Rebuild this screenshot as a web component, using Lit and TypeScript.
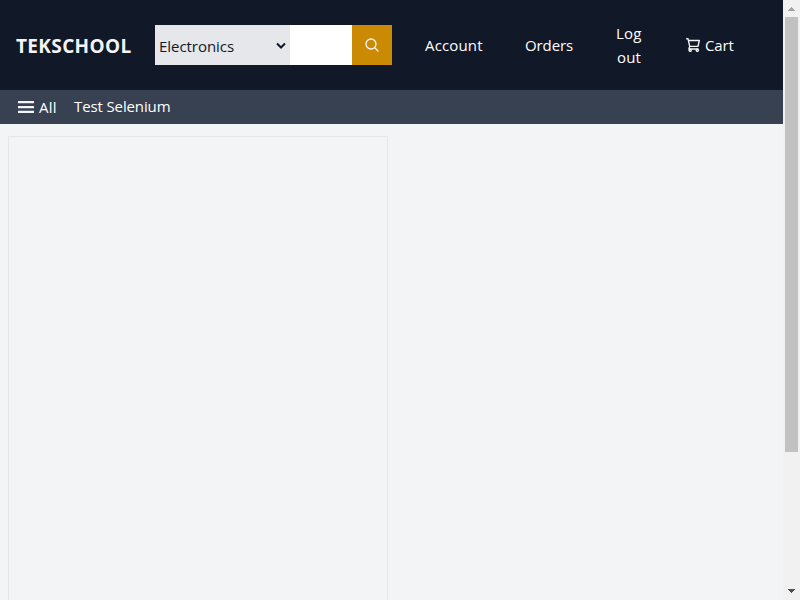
import { LitElement, html, css } from "lit";
import { customElement } from "lit/decorators.js";

@customElement("app-root")
export class AppRoot extends LitElement {
  static styles = css`
    :host {
      display: flex;
      width: 800px;
      height: 600px;
      overflow: hidden;
      background: #f3f4f6;
      font: 15px/24px "Open Sans", "Noto Sans", sans-serif;
      color: #fff;
    }
    * { box-sizing: border-box; }
    svg { display: block; flex: none; }
    .page { width: 783px; display: flex; flex-direction: column; }
    .top {
      height: 90px;
      flex: none;
      display: flex;
      align-items: center;
      background: #111827;
      padding-left: 16px;
    }
    .brand { width: 139px; font-size: 19px; font-weight: 700; line-height: 28px; padding-top: 1px; letter-spacing: 0.35px; white-space: nowrap; color: #f3f4f6; }
    .search { display: flex; width: 237px; height: 40px; }
    .category {
      width: 135px;
      display: flex;
      align-items: center;
      justify-content: space-between;
      padding: 2px 4px 0;
      background: #e5e7eb;
      color: #111827;
    }
    .category span { letter-spacing: -0.05px; }
    .query { width: 62px; background: #fff; }
    .go { width: 40px; background: #ca8a04; color: #f3f4f6; display: grid; place-items: center; }
    .links { display: flex; align-items: center; padding-left: 33px; }
    .account { width: 100px; letter-spacing: 0.15px; }
    .orders { width: 91px; letter-spacing: -0.1px; }
    .logout { width: 70px; letter-spacing: 0.15px; }
    .logout span { display: block; }
    .logout span + span { padding-left: 1px; }
    .cart { display: flex; align-items: center; gap: 5px; }
    .cart span { letter-spacing: -0.1px; }
    .sub {
      height: 34px;
      flex: none;
      display: flex;
      align-items: center;
      background: #374151;
      padding: 0 18px;
    }
    .all { display: flex; align-items: center; gap: 5px; width: 56px; letter-spacing: 0.3px; }
    .test { padding-bottom: 2px; letter-spacing: -0.12px; }
    .panel { width: 380px; margin: 12px 0 0 8px; flex: 1; border: 1px solid #e5e7eb; border-bottom: 0; }
    .scroll {
      width: 17px;
      background: #f1f1f1;
      display: flex;
      flex-direction: column;
      align-items: center;
      justify-content: space-between;
    }
    .thumb { width: 13px; height: 435px; background: #c1c1c1; margin-bottom: auto; }
  `;

  render() {
    return html`
      <div class="page">
        <header class="top">
          <div class="brand">TEKSCHOOL</div>
          <div class="search">
            <div class="category">
              <span>Electronics</span>
              <svg width="10" height="8" viewBox="0 0 10 8" fill="none" stroke="#111827" stroke-width="2"><path d="M1 1.5L5 5.5L9 1.5" /></svg>
            </div>
            <div class="query"></div>
            <div class="go">
              <svg width="16" height="16" viewBox="0 0 24 24" fill="none" stroke="currentColor" stroke-width="2" stroke-linecap="round">
                <path d="M21 21l-5.197-5.197m0 0A7.5 7.5 0 105.196 5.196a7.5 7.5 0 0010.607 10.607z" />
              </svg>
            </div>
          </div>
          <nav class="links">
            <span class="account">Account</span>
            <span class="orders">Orders</span>
            <div class="logout"><span>Log</span><span>out</span></div>
            <div class="cart">
              <svg width="14" height="14" viewBox="0 0 14 14" fill="none" stroke="#f3f4f6" stroke-width="1.4" stroke-linejoin="round" stroke-linecap="round">
                <path d="M.7.7H2L3.7 8.4H12L13.3 2.5H2.4M3.7 8.4L2.9 11H12" />
                <circle cx="4.2" cy="12.3" r="1.1" />
                <circle cx="11.3" cy="12.3" r="1.1" />
              </svg>
              <span>Cart</span>
            </div>
          </nav>
        </header>
        <div class="sub">
          <div class="all">
            <svg width="16" height="12" viewBox="0 0 16 12" fill="#f3f4f6"><path d="M0 0h16v2.3H0zM0 5h16v2.2H0zM0 9.8h16v2.2H0z" /></svg>
            <span>All</span>
          </div>
          <span class="test">Test Selenium</span>
        </div>
        <main class="panel"></main>
      </div>
      <div class="scroll">
        <svg width="17" height="17" shape-rendering="crispEdges"><path d="M5 11L8.5 7L12 11z" fill="#a3a3a3" /></svg>
        <div class="thumb"></div>
        <svg width="17" height="17" shape-rendering="crispEdges"><path d="M5 6L8.5 10L12 6z" fill="#505050" /></svg>
      </div>
    `;
  }
}
